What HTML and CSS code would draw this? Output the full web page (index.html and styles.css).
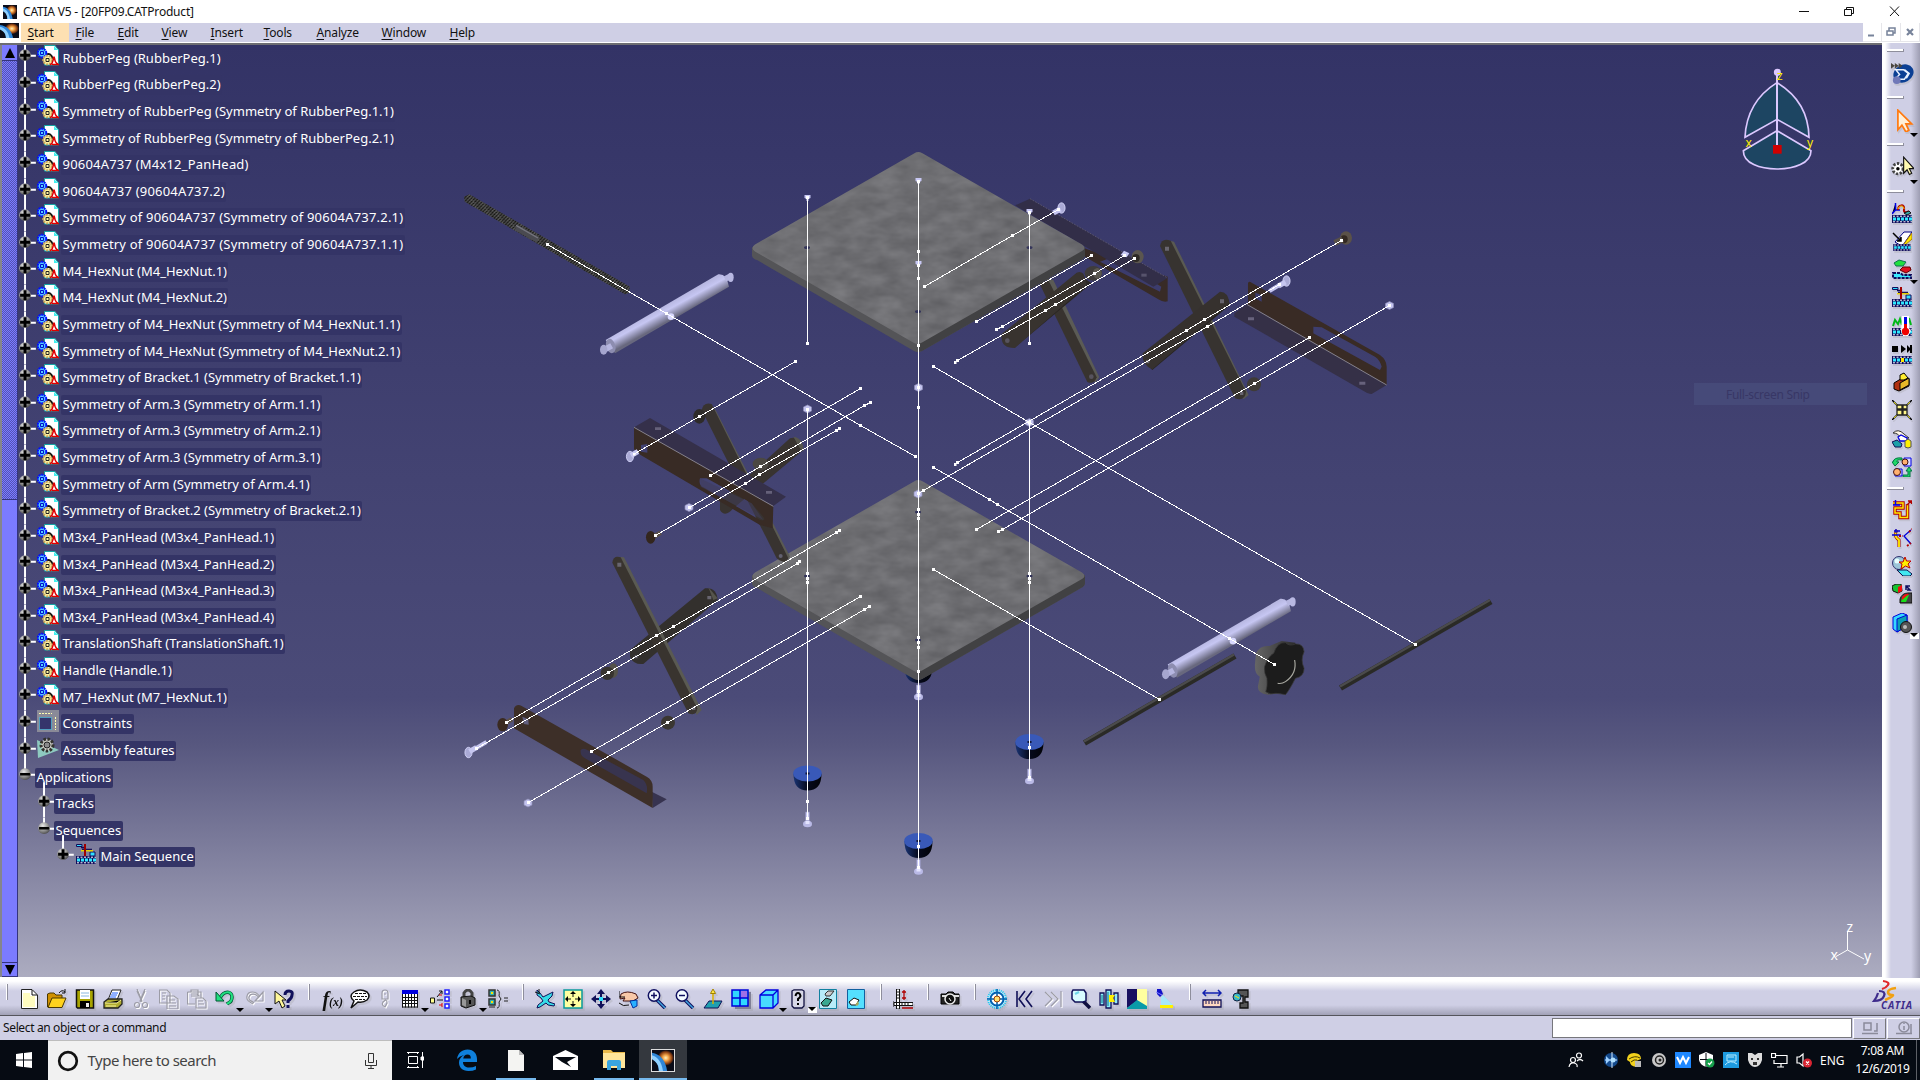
FILE: index.html
```html
<!DOCTYPE html>
<html lang="en">
<head>
<meta charset="utf-8">
<title>CATIA V5 - [20FP09.CATProduct]</title>
<link rel="stylesheet" href="styles.css">
</head>
<body>
<svg class="defs" width="0" height="0" aria-hidden="true">
  <defs>
    <radialGradient id="ball" cx=".4" cy=".3" r=".75"><stop offset="0" stop-color="#e8e8e8"/><stop offset=".6" stop-color="#8c8c8c"/><stop offset="1" stop-color="#444"/></radialGradient>
    <radialGradient id="burst"><stop offset="0" stop-color="#fff3c0"/><stop offset=".35" stop-color="#f4a548"/><stop offset=".75" stop-color="#8a3f12"/><stop offset="1" stop-color="#0a0a14"/></radialGradient>
    <symbol id="app" viewBox="0 0 16 16" preserveAspectRatio="none"><path fill="#0a0c18" d="M0 0h16v16H0z"/><ellipse cx="10" cy="6" rx="6" ry="6" fill="url(#burst)"/><path d="M0 2C6 3 10 8 11 16H5C5 11 3 8 0 6z" fill="#2f86d8"/><path d="M0 4C4 5 7 9 8 16H5C5 11 3 9 0 7z" fill="#8fd0ff"/></symbol>
    <symbol id="plus" viewBox="0 0 18 27"><path stroke="#fff" stroke-width="2" d="M7 0V27M12 11H18"/><circle cx="7" cy="10.3" r="6" fill="url(#ball)"/><path stroke="#000" stroke-width="3" d="M2 10.3H12M7 5.3V15.3"/></symbol>
    <symbol id="minus" viewBox="0 0 18 27"><path stroke="#fff" stroke-width="2" d="M7 0V10M12 11H18"/><circle cx="7" cy="10.3" r="6" fill="url(#ball)"/><path stroke="#000" stroke-width="2.6" d="M2 10.3H12"/></symbol>
    <symbol id="plusend" viewBox="0 0 18 27"><path stroke="#fff" stroke-width="2" d="M7 0V10M12 11H18"/><circle cx="7" cy="10.3" r="6" fill="url(#ball)"/><path stroke="#000" stroke-width="3" d="M2 10.3H12M7 5.3V15.3"/></symbol>
    <symbol id="part" viewBox="0 0 22 22"><path fill="#fff" stroke="#17a5a5" d="M7.500.5H18L21.500 5V20H7.500z"/><path fill="#40f0f0" d="M17 1V5H21z"/><path stroke="#111" stroke-width="2" fill="none" d="M9 10C12 8 14 9 16 14"/><circle cx="5" cy="8" r="4.300" fill="#58c8ff" stroke="#0010ff" stroke-width="2" stroke-dasharray="2 .7"/><path fill="none" stroke="#0010d0" d="M3.500 6.500h3v3h-3z"/><circle cx="10.500" cy="15" r="4.300" fill="#fff3a0" stroke="#c9a95c" stroke-width="2" stroke-dasharray="2 1"/><path fill="none" stroke="#222" d="M9 13.500h3v3h-3z"/><path fill="none" stroke="#e00000" stroke-width="1.500" d="M13 20C17 18 16 12 17 12S17 18 21 19M15 19.500H22"/></symbol>
    <symbol id="film" viewBox="0 0 20 8"><path fill="#100c5c" d="M0 0H20V8H0z"/><path stroke="#fff" stroke-dasharray="2 1.500" d="M1 1.200H20M1 6.800H20"/><path stroke="#30e8ff" stroke-width="3" stroke-dasharray="3 1" d="M1 4H20"/></symbol>
    <symbol id="seq" viewBox="0 0 20 20"><path fill="#30e0ff" stroke="#100c5c" d="M.5.5H6V2.500H.5zM14 8h5v4h-5z"/><path stroke="#100c5c" stroke-width="1.400" d="M5 3.500H9M6 5.500H16"/><path stroke="#e8d000" stroke-width="1.500" d="M5 6.700H17"/><path stroke="#a00000" stroke-width="2" d="M9 0V12"/><use href="#film" y="12" width="20" height="8"/></symbol>
    <symbol id="page" viewBox="0 0 20 20"><path fill="#fff" stroke="#222" d="M2.500.5H13L18.500 6V19.500H2.500z"/></symbol>
    <symbol id="glass" viewBox="0 0 20 20"><path stroke="#101060" stroke-width="3.500" d="M10 11L18 19"/><path stroke="#40a8e0" stroke-width="1.500" d="M10 11L18 19"/><circle cx="7" cy="6.500" r="5.700" fill="#f4fbff" stroke="#101060" stroke-width="1.500"/></symbol>
    <linearGradient id="rollA" gradientUnits="userSpaceOnUse" x1="638" y1="500" x2="660" y2="540"><stop offset="0" stop-color="#b8b8e2"/><stop offset=".35" stop-color="#c6c6f2"/><stop offset="1" stop-color="#68687e"/></linearGradient>
    <linearGradient id="foot"><stop offset="0" stop-color="#1a3474"/><stop offset=".5" stop-color="#060a1c"/><stop offset="1" stop-color="#020308"/></linearGradient>
    <linearGradient id="knobSide"><stop offset="0" stop-color="#666"/><stop offset="1" stop-color="#2b2b2b"/></linearGradient>
    <filter id="stone" x="0" y="0" width="100%" height="100%" color-interpolation-filters="sRGB"><feTurbulence type="fractalNoise" baseFrequency=".04 .08" numOctaves="3" seed="4"/><feColorMatrix values=".14 0 0 0 .36  .14 0 0 0 .36  .14 0 0 0 .375  0 0 0 0 1"/><feComposite in2="SourceGraphic" operator="in"/></filter>
    <pattern id="thread" width="4" height="12" patternUnits="userSpaceOnUse" patternTransform="rotate(62) scale(2)"><path fill="#4a4a4a" d="M0 0h4v12H0z"/><path stroke="#12120f" stroke-width="1.600" d="M0 0L4 12"/><path stroke="#7a7a76" stroke-width=".6" d="M2 0L4 7"/></pattern>
    <marker id="node" markerUnits="userSpaceOnUse" markerWidth="3" markerHeight="3" refX="1.500" refY="1.500"><path fill="#fff" d="M0 0h3v3H0z"/></marker>
    <g id="plate"><path fill="#545457" d="M752 247V256Q753 259 757 260L914 351Q918 353 922 351L1081 260Q1085 258 1085 255V247L918 337z"/><path fill="#414143" d="M918 338L1085 247V255Q1085 258 1081 260L922 351L918 352z"/><path fill="#717175" filter="url(#stone)" d="M914 153.500Q918 151 922 153L1082 244.500Q1087 248 1082 251L922 342.500Q918 345 914 343L755 251.500Q750 248 755 244.500z"/></g>
    <g id="peg"><path fill="url(#foot)" d="M-14 0C-14 12-9 17 0 17S14 12 14 0z"/><ellipse rx="14.300" ry="8" fill="#3959b8"/><path fill="#101738" d="M-2-1h4v2h-4z"/></g>
    <g id="screw"><path fill="#c8c8f2" stroke="#8d8db4" stroke-width=".7" d="M-2-12H2V-3H-2z"/><ellipse rx="4.500" ry="3.300" fill="#b9b9e6" cy="0"/><path fill="#e3e3ff" d="M-2-3h4v3h-4z"/></g>
    <g id="nut"><path fill="#c3c3ef" stroke="#8e8eb6" stroke-width=".7" d="M-4-2L0-4 4-2V2L0 4-4 2z"/></g>
    <g id="bolt"><ellipse rx="3.600" ry="5.200" fill="#aaaad6" stroke="#dcdcff" stroke-width=".8"/><path stroke="#c6c6f0" stroke-width="5" d="M1-1L8-5"/></g>
    <g id="roller"><path fill="url(#rollA)" d="M467 600L805 403Q830 400 837 440L495 640z"/><ellipse cx="482" cy="618" rx="14" ry="22" fill="#8d8db0" transform="rotate(-15 482 618)"/><path stroke="#b6b6e0" stroke-width="17" d="M462 630L485 617M825 417L842 408"/><ellipse cx="461" cy="629" rx="11" ry="15" fill="#a6a6cf"/><ellipse cx="842" cy="412" rx="9" ry="14" fill="#b8b8e2"/><circle cx="663" cy="530" r="10" fill="#d8d8ff"/></g>
  </defs>
</svg>

<header class="titlebar">
  <svg class="appicon" width="14" height="14"><use href="#app"/></svg>
  <span class="title">CATIA V5 - [20FP09.CATProduct]</span>
  <svg class="wincontrols" width="104" height="20" fill="none" stroke="#111"><path d="M0 10.500H10M45.500 8.500h7v6h-7zM47.500 8V6.500h7v6H53M91 5.500L100 15M100 5.500L91 15"/></svg>
</header>

<nav class="menubar">
  <svg class="docicon" width="21" height="20"><path fill="#fff" d="M0 0h21v20H0z"/><use href="#app" width="19" height="15"/></svg>
  <span class="menu on w48"><u>S</u>tart</span><span class="menu w42"><u>F</u>ile</span><span class="menu w44"><u>E</u>dit</span><span class="menu w49"><u>V</u>iew</span><span class="menu w53"><u>I</u>nsert</span><span class="menu w53"><u>T</u>ools</span><span class="menu w65"><u>A</u>nalyze</span><span class="menu w68"><u>W</u>indow</span><span class="menu"><u>H</u>elp</span>
  <span class="mdi"><svg width="18" height="18" stroke="#77839a" stroke-width="2"><path d="M5 12.500H11"/></svg><svg width="18" height="18" fill="none" stroke="#77839a" stroke-width="1.500"><path d="M5 8h6v4H5zM7 8V5h6v5h-2"/></svg><svg width="18" height="18" stroke="#77839a" stroke-width="2.200"><path d="M6 6L12 12M12 6L6 12"/></svg></span>
</nav>

<main class="work">
<section class="viewport">
  <svg class="scene" width="1882" height="932" viewBox="0 45 1882 932">
    <!-- rear bracket, partly behind the top plate -->
    <g transform="translate(900 140) scale(.33333)">
      <path fill="#382b26" fill-rule="evenodd" d="M553 325L803 410V484Q790 488 775 478L555 350zM600 365L780 455 784 440 640 350z"/>
      <path fill="#322e48" d="M345 196L390 176 803 414 760 440z"/>
      <path fill="none" stroke="#57536c" stroke-width="3" stroke-dasharray="5 4" d="M390 176L803 414"/>
      <path fill="#5b5b55" d="M440 415L460 420 598 712 585 728z"/><path fill="#38332f" d="M418 430L445 420 590 712Q582 735 562 726z"/>
      <path fill="#2b2725" d="M530 400L575 430 345 622 330 615z"/><path fill="#38332f" d="M305 582L530 398Q550 390 555 415L560 435 345 624Q300 625 305 582z"/>
      <circle cx="322" cy="602" r="7" fill="#57535e"/><circle cx="574" cy="710" r="7" fill="#57535e"/>
      <ellipse cx="580" cy="400" rx="26" ry="22" fill="#3f3c3a"/><ellipse cx="592" cy="400" rx="13" ry="16" fill="#5a574f"/>
      <ellipse cx="713" cy="350" rx="18" ry="20" fill="#5b564f"/><ellipse cx="708" cy="354" rx="11" ry="12" fill="#2d2925"/>
      <path fill="#c8c8f4" d="M662 345L672 332 688 340 680 352z"/><path fill="#57536c" d="M724 401h16v9h-16z"/>
    </g>
    <use href="#plate"/>
    <use href="#peg" x="918.500" y="666"/>
    <use href="#plate" y="328"/>
    <g fill="#33345a"><ellipse cx="807" cy="247.500" rx="3" ry="1.500"/><ellipse cx="1029.500" cy="247.500" rx="3" ry="1.500"/><ellipse cx="918" cy="311.500" rx="3" ry="1.500"/><ellipse cx="807" cy="576" rx="3" ry="1.500"/><ellipse cx="1029.500" cy="576" rx="3" ry="1.500"/><ellipse cx="918" cy="640" rx="3" ry="1.500"/><ellipse cx="918" cy="512" rx="3" ry="1.500"/></g>

    <!-- left side: threaded shaft, roller, scissor arms and bracket -->
    <g transform="translate(450 140) scale(.33333)">
      <path fill="url(#thread)" d="M44 185L42 170 58 163 540 440 536 460 525 463z"/>
      <path stroke="#4a4a50" stroke-width="18" d="M198 262L264 300"/><path stroke="#75757f" stroke-width="4" d="M198 256L264 294"/>
      <use href="#roller"/>
      <path fill="#5a5a52" d="M780 790L798 812 1020 1250 1000 1270z"/><path fill="#383330" d="M755 810Q760 785 785 792L1015 1255Q1005 1275 980 1255z"/>
      <path fill="#383330" d="M810 1085L1020 895Q1050 885 1060 930L850 1105Q825 1135 810 1110z"/><path fill="#55554d" d="M1030 890Q1062 895 1060 935L1050 925z"/>
      <ellipse cx="748" cy="829" rx="18" ry="22" fill="#2e2b29"/><ellipse cx="932" cy="972" rx="24" ry="19" fill="#4b4843"/><circle cx="992" cy="1248" r="6" fill="#626070"/>
      <path fill="#35304a" d="M552 862L600 834 1008 1070 970 1098z"/>
      <path fill="#382b25" fill-rule="evenodd" d="M552 862L970 1099 968 1165 930 1155 572 945 552 928zM573 915V935L592 938V912zM750 1015Q745 1035 760 1042L930 1140Q950 1145 940 1130L905 1090 770 1015z"/>
      <path fill="#403c5a" opacity=".55" d="M750 1015L905 1090 940 1140 752 1040z"/>
      <path stroke="#85818b" stroke-width="3" d="M552 862L970 1099"/><path fill="#66617a" d="M615 862h18v8h-18zM948 1053h18v8h-18z"/>
      <path stroke="#5a5048" stroke-width="14" d="M608 1192L632 1178"/><ellipse cx="602" cy="1192" rx="14" ry="19" fill="#33261d"/>
    </g>
    <g transform="translate(450 520) scale(.33333)">
      <path fill="#33302d" d="M540 390L765 205Q800 200 803 240L580 432Q550 435 540 410z"/><path fill="#56554c" d="M775 202L803 235 790 240z"/>
      <path fill="#5a5a52" d="M500 110L522 112 755 570 740 585z"/><path fill="#39342f" d="M487 128Q490 105 512 112L742 565Q740 590 715 580z"/>
      <path fill="#68656f" d="M502 128h12v12h-12zM772 228h12v10h-12zM726 560h10v10h-10zM554 406h9v9h-9z"/>
      <ellipse cx="490" cy="452" rx="14" ry="22" fill="#55534a"/><ellipse cx="472" cy="460" rx="20" ry="20" fill="#38342f"/><ellipse cx="654" cy="608" rx="21" ry="21" fill="#3b3732"/>
      <path fill="#37334f" d="M605 815L650 838 608 864z"/>
      <path fill="#3d2f28" d="M192 565Q200 550 215 558L590 770Q608 780 608 800V864L192 625z"/>
      <path fill="#38344f" d="M392 690Q400 682 412 690L580 780Q595 795 590 820L405 715Q390 708 392 690z"/><path fill="#626080" d="M217 590L235 598 236 614 222 612z"/>
      <path stroke="#5d5148" stroke-width="14" d="M165 610L186 598"/><ellipse cx="158" cy="614" rx="16" ry="20" fill="#3a2a20"/>
    </g>
    <!-- right side: scissor arms and bracket -->
    <g transform="translate(900 140) scale(.33333)">
      <path fill="#5a5a52" d="M800 300L822 305 1046 765 1030 778z"/><path fill="#373330" d="M780 318Q785 292 812 302L1038 755Q1035 785 1005 775z"/>
      <path fill="#282523" d="M745 678L985 478 990 495 757 690z"/><path fill="#36312e" d="M728 640L960 455Q985 455 988 490L757 688Q725 675 728 640z"/>
      <path fill="#68656f" d="M795 320h12v12h-12zM960 478h12v12h-12zM738 660h10v10h-10zM1020 755h10v10h-10z"/>
      <ellipse cx="1062" cy="733" rx="21" ry="21" fill="#3f3b36"/>
      <path fill="#353047" d="M1003 520L1042 492 1460 735 1415 762Q1410 762 1400 758L1003 530z"/>
      <path fill="#392b25" fill-rule="evenodd" d="M1044 430Q1045 422 1055 428L1440 645Q1460 660 1460 680V735L1044 494zM1240 560V580L1440 690 1445 680Q1440 660 1425 650L1265 562zM1066 458V475L1085 485V465z"/>
      <path stroke="#85818b" stroke-width="3" d="M1042 494L1460 735"/><path fill="#67627c" d="M1044 532h18v9h-18zM1378 725h18v9h-18z"/>
      <ellipse cx="1338" cy="294" rx="18" ry="20" fill="#5b5248"/><ellipse cx="1332" cy="298" rx="11" ry="12" fill="#332922"/><path stroke="#575048" stroke-width="18" d="M1304 309L1328 298"/>
    </g>

    <!-- rods, roller and knob at lower right -->
    <g fill="none"><path stroke="#2a2a26" stroke-width="6" d="M1084.500 743L1235 656M1340.500 688L1491 601.500"/><path stroke="#4b4b4c" stroke-width="2.500" d="M1084 741.500L1234 654.500M1340 686.500L1490 600"/></g>
    <g transform="translate(1012 464.500) scale(.33333)"><use href="#roller"/></g>
    <g transform="translate(900 460) scale(.3954 .33333)">
      <path fill="url(#knobSide)" d="M900 580Q910 555 935 558L965 543 1000 548V600L960 700 930 704Q905 700 905 680L910 650Q895 640 898 610z"/>
      <path fill="#1c1c1c" stroke="#3a3a3a" stroke-width="2" d="M945 580Q955 545 975 548Q985 560 1000 552Q1020 550 1022 575Q1012 600 1022 625Q1022 650 1000 655Q985 690 975 704Q955 700 950 700Q935 705 925 695Q930 680 928 655Q920 640 922 620Q930 590 945 580z"/>
      <path fill="none" stroke="#a8a8a0" stroke-width="3" d="M998 600Q1005 640 975 665Q965 673 955 670"/>
    </g>
    <!-- feet and fasteners -->
    <use href="#peg" x="807.500" y="773.500"/><use href="#peg" x="918.500" y="841"/><use href="#peg" x="1029.500" y="742"/>
    <use href="#screw" x="807.500" y="824"/><use href="#screw" x="918.500" y="697"/><use href="#screw" x="918.500" y="871.500"/><use href="#screw" x="1029.500" y="781"/>
    <g fill="#c8c8f4"><path id="cap" d="M804.500 195h6v3l-2 1v2h-2v-2l-2-1z"/><use href="#cap" x="111" y="-17"/><use href="#cap" x="111" y="66"/><use href="#cap" x="222" y="14"/></g>
    <use href="#nut" x="807.500" y="409"/><use href="#nut" x="918.500" y="387.500"/><use href="#nut" x="918" y="494"/><use href="#nut" x="1029.500" y="422.500"/><use href="#nut" x="689" y="507.500"/><use href="#nut" x="528" y="803"/><use href="#nut" x="1389.500" y="305.500"/>
    <use href="#bolt" x="630" y="456.500"/><g transform="translate(468.500 752.500)"><use href="#bolt"/><path stroke="#c6c6f0" stroke-width="4" d="M7-4L18-10.500"/></g>
    <g transform="translate(1061.500 208) rotate(180)"><use href="#bolt"/></g><g transform="translate(1286.500 281) rotate(180)"><use href="#bolt"/><path stroke="#c6c6f0" stroke-width="4" d="M7-4L17-10"/></g>

    <!-- exploded-view tracks -->
    <g class="tracks">
      <path d="M807.500 197.500V343.500M918.500 181.500V251.500V265.500V278.500V345.500V387.500V407.500V493.500V509.500V514.500V518.500V637.500V642.500V647.500V671.500V691.500V846.500V867.500M1029.500 212.500V343.500M807.500 409.500V573.500V578.500V582.500V801.500V818.500M1029.500 423V573.500V578.500V582.500V747.500V777.500"/>
      <path d="M547.500 244.500L666.500 313.500 860.500 425.500 915.500 456.500M634 454L699.500 416.500 795.500 361.500M710.500 475.500L860.500 388.500M689.500 507.500L760.500 466.500 864.500 405.500 870.500 402.500M655.500 535.500L745.500 483.500 759.500 474.500 836.500 430.500 839.500 428.500M924.500 286.500L1012.500 235.500 1058.500 209.500M976.500 321.500L1091.500 255.500M996.500 329.500L1002.500 326.500 1094.500 273.500 1124.500 255.500M955 362.500L957.500 360.500 1045.500 310.500 1055.500 304.500 1134.500 258.500"/>
      <path d="M933.500 366.500L1029.500 422.500 1415.500 644.500M955 464.500L957.500 462.500 1186.500 330.500 1204.500 319.500 1341.500 240.500M918.500 493.500L923.500 490.500 1207.500 326.500 1279.500 284.500M976.500 529.500L1309.500 337.500M998.500 531.500L1002.500 529.500 1254.500 383.500 1389.500 305.500M933.500 467.500L989.500 499.500 997.500 504.500 1229.500 638.500 1274.500 664.500M933.500 569.500L1159.500 699.500"/>
      <path d="M506.500 722.500L656.500 635.500 673.500 626.500 836.500 532.500 839.500 530.500M476.500 748.500L608.500 672.500 797.500 563.500 799.500 561.500M591.500 751.500L860.500 596.500M528.500 802.500L667.500 722.500 864.500 609.500 869.500 606.500"/>
    </g>

    <!-- compass -->
    <g transform="translate(1680 0) scale(.33333)" fill="#1d4562" stroke="#dcc8ff" stroke-width="5">
      <path d="M291 248Q200 305 195 412L291 358 387 412Q385 305 291 248zM291 392L190 452C190 490 240 507 291 507S393 490 393 452z"/><path stroke-width="6" d="M291 217V438"/><circle cx="292" cy="217" r="8" fill="#dcc8ff"/><path stroke="none" fill="#d00000" d="M279 435h26v26h-26z"/>
    </g>
    <g class="axis yellow"><text x="1777" y="80">z</text><text x="1745.500" y="146.500">x</text><text x="1807" y="147">y</text></g>
    <path fill="none" stroke="#fff" d="M1847.500 931V950L1836 956.500M1847.500 950L1864 959"/>
    <g class="axis"><text x="1846.500" y="932">z</text><text x="1830.500" y="960">x</text><text x="1864" y="961">y</text></g>
    <path fill="#464a79" d="M1694 383h173v22h-173z"/><text class="snip" x="1726" y="398.500" textLength="84">Full-screen Snip</text>
  </svg>

  <div class="scroll"><span class="arrow"><svg width="10" height="10"><path d="M5 0L10 10H0z"/></svg></span><span class="track"></span><span class="thumb"></span><span class="arrow"><svg width="10" height="10"><path d="M0 0H10L5 10z"/></svg></span></div>

  <ul class="tree">
    <li><svg class="node"><use href="#plus"/></svg><svg class="ico"><use href="#part"/></svg><span>RubberPeg (RubberPeg.1)</span></li>
    <li><svg class="node"><use href="#plus"/></svg><svg class="ico"><use href="#part"/></svg><span>RubberPeg (RubberPeg.2)</span></li>
    <li><svg class="node"><use href="#plus"/></svg><svg class="ico"><use href="#part"/></svg><span>Symmetry of RubberPeg (Symmetry of RubberPeg.1.1)</span></li>
    <li><svg class="node"><use href="#plus"/></svg><svg class="ico"><use href="#part"/></svg><span>Symmetry of RubberPeg (Symmetry of RubberPeg.2.1)</span></li>
    <li><svg class="node"><use href="#plus"/></svg><svg class="ico"><use href="#part"/></svg><span class="num">90604A737 (M4x12_PanHead)</span></li>
    <li><svg class="node"><use href="#plus"/></svg><svg class="ico"><use href="#part"/></svg><span class="num">90604A737 (90604A737.2)</span></li>
    <li><svg class="node"><use href="#plus"/></svg><svg class="ico"><use href="#part"/></svg><span class="num">Symmetry of 90604A737 (Symmetry of 90604A737.2.1)</span></li>
    <li><svg class="node"><use href="#plus"/></svg><svg class="ico"><use href="#part"/></svg><span class="num">Symmetry of 90604A737 (Symmetry of 90604A737.1.1)</span></li>
    <li><svg class="node"><use href="#plus"/></svg><svg class="ico"><use href="#part"/></svg><span>M4_HexNut (M4_HexNut.1)</span></li>
    <li><svg class="node"><use href="#plus"/></svg><svg class="ico"><use href="#part"/></svg><span>M4_HexNut (M4_HexNut.2)</span></li>
    <li><svg class="node"><use href="#plus"/></svg><svg class="ico"><use href="#part"/></svg><span>Symmetry of M4_HexNut (Symmetry of M4_HexNut.1.1)</span></li>
    <li><svg class="node"><use href="#plus"/></svg><svg class="ico"><use href="#part"/></svg><span>Symmetry of M4_HexNut (Symmetry of M4_HexNut.2.1)</span></li>
    <li><svg class="node"><use href="#plus"/></svg><svg class="ico"><use href="#part"/></svg><span>Symmetry of Bracket.1 (Symmetry of Bracket.1.1)</span></li>
    <li><svg class="node"><use href="#plus"/></svg><svg class="ico"><use href="#part"/></svg><span>Symmetry of Arm.3 (Symmetry of Arm.1.1)</span></li>
    <li><svg class="node"><use href="#plus"/></svg><svg class="ico"><use href="#part"/></svg><span>Symmetry of Arm.3 (Symmetry of Arm.2.1)</span></li>
    <li><svg class="node"><use href="#plus"/></svg><svg class="ico"><use href="#part"/></svg><span>Symmetry of Arm.3 (Symmetry of Arm.3.1)</span></li>
    <li><svg class="node"><use href="#plus"/></svg><svg class="ico"><use href="#part"/></svg><span>Symmetry of Arm (Symmetry of Arm.4.1)</span></li>
    <li><svg class="node"><use href="#plus"/></svg><svg class="ico"><use href="#part"/></svg><span>Symmetry of Bracket.2 (Symmetry of Bracket.2.1)</span></li>
    <li><svg class="node"><use href="#plus"/></svg><svg class="ico"><use href="#part"/></svg><span>M3x4_PanHead (M3x4_PanHead.1)</span></li>
    <li><svg class="node"><use href="#plus"/></svg><svg class="ico"><use href="#part"/></svg><span>M3x4_PanHead (M3x4_PanHead.2)</span></li>
    <li><svg class="node"><use href="#plus"/></svg><svg class="ico"><use href="#part"/></svg><span>M3x4_PanHead (M3x4_PanHead.3)</span></li>
    <li><svg class="node"><use href="#plus"/></svg><svg class="ico"><use href="#part"/></svg><span>M3x4_PanHead (M3x4_PanHead.4)</span></li>
    <li><svg class="node"><use href="#plus"/></svg><svg class="ico"><use href="#part"/></svg><span>TranslationShaft (TranslationShaft.1)</span></li>
    <li><svg class="node"><use href="#plus"/></svg><svg class="ico"><use href="#part"/></svg><span>Handle (Handle.1)</span></li>
    <li><svg class="node"><use href="#plus"/></svg><svg class="ico"><use href="#part"/></svg><span>M7_HexNut (M7_HexNut.1)</span></li>
    <li><svg class="node"><use href="#plus"/></svg><svg class="ico" viewBox="0 0 22 22"><path fill="#8a8a98" d="M0 0h22v22H0z"/><path fill="#35356c" stroke="#40e0ff" stroke-dasharray="1 1" d="M2.500 7.500h12v12h-12z"/><path fill="none" stroke="#ffffb0" stroke-dasharray="2 1" d="M2 3.500H15M18.500 7V20"/></svg><span>Constraints</span></li>
    <li><svg class="node"><use href="#plus"/></svg><svg class="ico" viewBox="0 0 22 22"><path fill="#8ecac0" d="M0 3L22 13 1 21z"/><circle cx="10" cy="8" r="6" fill="#c8c8c0" stroke="#33332f" stroke-width="3" stroke-dasharray="2.500 1.500"/><circle cx="10" cy="8" r="3" fill="#8a8a8a" stroke="#222"/></svg><span>Assembly features</span></li>
    <li><svg class="node"><use href="#minus"/></svg><span class="bare">Applications</span></li>
    <li class="l2"><svg class="node stem" viewBox="0 0 18 27"><path stroke="#fff" stroke-width="2" d="M7-9V8"/><use href="#plus"/></svg><span class="bare">Tracks</span></li>
    <li class="l2"><svg class="node"><use href="#minus"/></svg><span class="bare">Sequences</span></li>
    <li class="l3"><svg class="node stem" viewBox="0 0 18 27"><path stroke="#fff" stroke-width="2" d="M7-9V8"/><use href="#plusend"/></svg><svg class="ico seq"><use href="#seq"/></svg><span>Main Sequence</span></li>
  </ul>
</section>

<aside class="sidebar">
  <i class="hgrip"></i>
  <svg class="tool top" viewBox="0 0 24 22"><ellipse cx="13" cy="11" rx="11" ry="9" fill="#0b3f94" transform="rotate(-30 13 11)"/><path fill="none" stroke="#e8f0ff" stroke-width="1.500" d="M5 7H13L18 11 14 17H4L9 12zM14 7L19 11 16 16"/><circle cx="6" cy="18" r="4" fill="#7078b8"/><path fill="#4a4640" d="M0 0l4 3-4 3zM4 0l4 3-4 3zM8 0l4 3-4 3z"/></svg>
  <i class="hgrip"></i>
  <svg class="tool top" viewBox="0 0 20 20"><path fill="#fff0d8" stroke="#ff7a10" stroke-width="1.500" d="M6 1V18L9.500 14 13 20 15.500 18.500 13 13H18z"/></svg><b class="drop"></b>
  <i class="hgrip"></i>
  <svg class="tool top" viewBox="0 0 20 20"><circle cx="6" cy="11" r="4.500" fill="#fff" stroke="#444" stroke-width="2.500" stroke-dasharray="2 1.300"/><circle cx="6" cy="11" r="1.500"/><path fill="#fff9b0" stroke="#111" d="M11 1V15L14 12 16 16 18 15 16 11H20z"/></svg><b class="drop"></b>
  <i class="hgrip"></i>
  <div class="stack">
    <svg class="tool" viewBox="0 0 20 20"><path stroke="#0000e0" stroke-width="1.500" d="M3.500 0V7L0 11M3 7H8"/><path fill="none" stroke="#b00000" stroke-width="2" d="M6 7C6 1 13 1 12 6S16 9 17 8"/><path fill="none" stroke="#ffe400" d="M6 6C7 2 12 2 12 6"/><path fill="#36a8a8" stroke="#111" d="M12 10L17 8 19 10 15 12z"/><use href="#film" y="12" width="20" height="8"/></svg>
    <svg class="tool" viewBox="0 0 20 20"><path fill="#fff" stroke="#000080" d="M3 11L12 1H20L11 14H8z"/><path fill="#ffe900" stroke="#b08000" d="M12 13L20 2V8L13 14z"/><path stroke="#000" stroke-width="1.500" d="M1 2L9 10M9 6V10H5"/><use href="#film" y="13" width="20" height="7"/></svg>
    <svg class="tool" viewBox="0 0 20 20"><path fill="#20e040" stroke="#107050" d="M2 4L7 1 14 3 11 7H4z"/><path fill="#e01020" stroke="#600" d="M8 11L11 8 18 8 19 11 14 14z"/><path fill="#39e8ff" stroke="#100c5c" stroke-width="2" stroke-dasharray="3 1" d="M1 14H8L11 16H19V19H1z"/></svg>
    <svg class="tool"><use href="#seq"/></svg>
    <svg class="tool" viewBox="0 0 20 20"><path fill="none" stroke="#00b818" stroke-width="2" d="M1 10L3 4 6 8 8 3 10 9M17 2L19 9"/><use href="#film" y="12" width="20" height="8"/><path fill="#fff" d="M10 0h7v12l2 3-3 5h-5l-2-5z"/><path stroke="#0000e8" stroke-width="3" d="M13.500 1V8"/><path stroke="#f00000" stroke-width="3" d="M13.500 8V15"/><circle cx="13.500" cy="15.500" r="3.700" fill="#f00000"/></svg>
    <svg class="tool" viewBox="0 0 20 20"><path d="M0 2h6v6H0zM9 1l5 4-5 4zM15 1l4 4-4 4zM18 1h2v8h-2z"/><use href="#film" y="12" width="20" height="8"/><path fill="#ffe900" d="M9 14h3v4H9z"/></svg>
    <svg class="tool" viewBox="0 0 20 20"><path fill="#b03010" stroke="#000" d="M2 11L12 5 17 7V14L7 19 2 17z"/><path fill="#e8b828" stroke="#000" d="M8 11L17 6V13L8 18z"/><path fill="#ffef30" stroke="#000" d="M8 8V3L12 1 16 6 12 8z"/></svg>
    <svg class="tool" viewBox="0 0 20 20"><path stroke="#000" stroke-width="1.500" d="M0 0L20 20M20 0L0 20"/><path stroke="#d6d000" d="M2 2L18 18M18 2L2 18"/><path fill="#fff68a" stroke="#222" stroke-width="1.300" d="M5 5h5v4H5zM11 5h4v4h-4zM5 10h5v5H5zM11 10h4v5h-4z"/></svg>
    <svg class="tool" viewBox="0 0 20 20"><path fill="#fff8e8" stroke="#333" d="M1 4Q6-1 12 5L17 9H8Q7 4 1 4z"/><path fill="#fff" stroke="#0000e0" stroke-width="1.300" d="M6 8L9 6 15 9V12H8z"/><path fill="#1ba0a8" stroke="#101058" d="M0 13L5 11 10 15 9 18 3 18z"/><path fill="#fff000" stroke="#555" d="M13 12L16 10 19 12V18L16 19 13 18z"/></svg>
    <svg class="tool" viewBox="0 0 20 20"><path fill="#20d868" stroke="#074" d="M1 5Q2 0 10 1V3Q4 2 5 5H7L3 9 0 5zM11 18H16V14H14L17 10 20 14H18V20H11z"/><path fill="#d8d8ff" stroke="#0000e8" d="M12 1h7v8h-7zM3 12h7v7H3z"/><circle cx="13" cy="5" r="3" fill="#ffb070" stroke="#411"/><circle cx="5" cy="15" r="3.500" fill="#ffb070" stroke="#411"/></svg>
  </div><b class="drop mid"></b>
  <i class="hgrip low"></i>
  <div class="stack">
    <svg class="tool" viewBox="0 0 20 20"><path fill="none" stroke="#b00000" stroke-width="3.400" d="M1 3H11V8H3V13H8V17.500H15.500V4"/><path fill="none" stroke="#ffe800" stroke-width="1.500" d="M1 3H11V8H3V13H8V17.500H15.500V4"/><path fill="none" stroke="#b00000" stroke-width="1.300" d="M15 5L19 1M16 1H19.500V4"/><path stroke="#00e" stroke-width="1.500" d="M3.500 0V5M1 5H8"/></svg>
    <svg class="tool" viewBox="0 0 20 20"><path fill="none" stroke="#a00000" stroke-width="3" d="M5 2Q1 8 7 12V19"/><path fill="none" stroke="#fff000" stroke-width="1.800" d="M5 2Q1 8 7 12V19"/><path fill="none" stroke="#0000d8" stroke-width="1.300" d="M19 2L12 8 19 16M0 7H9M4 1V5M2 3H8"/><path fill="none" stroke="#b00000" stroke-width="1.800" stroke-dasharray="2 1.500" d="M7 8H11M17 4L20 1M15 18L19 15"/></svg>
    <svg class="tool" viewBox="0 0 20 20"><circle cx="7" cy="7" r="6.500" fill="#9cc4d8" stroke="#303070"/><circle cx="5" cy="5" r="2.500" fill="#e8ffff"/><path fill="#42e8f0" stroke="#101050" d="M5 14H15L20 18 18 20H11z"/><path fill="#fff000" stroke="#c00000" d="M13 1L14.500 5H19L16 8 18 12 13.500 10 9 13 10 8 7 6H11z"/></svg>
    <svg class="tool" viewBox="0 0 20 20"><path fill="#18c030" stroke="#111" d="M0 2L4 0H9L10 7 6 9 1 7z"/><path fill="#f01010" d="M6 3L10 1V7L6 9z"/><path fill="none" stroke="#101060" stroke-width="1.500" d="M14 6V2H18M14 2L18 6H15"/><path fill="#444" stroke="#111" d="M8 19V15Q10 9 16 9H20V19z"/><path fill="#18e018" d="M9 18Q10 11 17 11L14 18z"/><path fill="#f01010" d="M10 13Q13 9 17 10L10 16z"/></svg>
    <svg class="tool" viewBox="0 0 20 20"><path fill="#36d8ff" stroke="#0000d8" d="M1 4L10 0 15 2V13L5 19 1 16z"/><path fill="#0aa0b4" stroke="#0000d8" d="M5 6L15 2V13L5 19z"/><circle cx="14" cy="14" r="5.500" fill="#555" stroke="#111"/><circle cx="13" cy="14" r="2" fill="#bbb"/></svg>
  </div><b class="drop box"></b>
</aside>
</main>

<section class="toolbar">
  <i class="vgrip first"></i>
  <svg class="t" viewBox="0 0 20 20"><use href="#page"/><path fill="#fffcc0" d="M4 4h7v3h5v11H4z"/><path fill="none" stroke="#111" d="M13 1V6H18"/></svg>
  <svg class="t" viewBox="0 0 20 20"><path fill="#d09000" stroke="#4a3800" d="M.5 18V5L3 4H7L9 6H15V9"/><path fill="#ffd21c" stroke="#4a3800" d="M1 18.500L5 9H19L15 18.500z"/><path fill="none" stroke="#111" d="M12 4Q15 0 18 3M18 0V4H15"/></svg>
  <svg class="t" viewBox="0 0 20 20"><path fill="#a8a400" stroke="#111" stroke-width="1.500" d="M1.500 1h17v18h-16l-1-1z"/><path fill="#fff" d="M5 1h10v9H5z"/><path stroke="#8ab8e0" d="M6 4H14M6 7H14"/><path d="M5 12h10v7H5z"/><path fill="#eee" d="M11 14h3v4h-3z"/></svg>
  <svg class="t" viewBox="0 0 20 20"><path fill="#fff" stroke="#222" d="M5 11L9 1H18L14 11z"/><path stroke="#2060ff" d="M9 4H15M8 6H14M7 8H13"/><path fill="#b0ac30" stroke="#222" stroke-width="1.300" d="M1 13L5 10H19V15L15 19H1z"/><path stroke="#f8f4a0" d="M2 14H14L18 11M3 17H13"/></svg>
  <svg class="t dis" viewBox="0 0 20 20"><path d="M6 0L11 12M14 0L9 12M6 2L11 13M14 2L9 13"/><circle cx="6" cy="16" r="2.500"/><circle cx="14" cy="16" r="2.500"/></svg>
  <svg class="t dis" viewBox="0 0 20 20"><path d="M.5 1H8L11 4V14H.5zM8 7H15L19 10V20H8zM3 4H7M3 7H6M3 10H6M10 11H16M10 14H17M10 17H17"/></svg>
  <svg class="t dis" viewBox="0 0 20 20"><path d="M.5 3H14V9M.5 3V15H8M4 3V1H11V5H4M4 7H12L10 5M9 9H16L19 12V19H9zM11 12H16M11 15H17"/></svg>
  <svg class="t wide" viewBox="0 0 20 20"><path fill="none" stroke="#053" stroke-width="3.500" d="M5 9C9 1 17 2 17 8S14 13 12 15"/><path fill="none" stroke="#20e080" stroke-width="2" d="M5 9C9 1 17 2 17 8S14 13 12 15"/><path fill="#20e080" stroke="#053" d="M1 3V12H9z"/></svg><b class="drop"></b>
  <svg class="t wide dis" viewBox="0 0 20 20"><path d="M15 8C11 1 3 2 2 7S5 13 8 15M14 9C11 4 5 4 4 8S6 11 9 14M18 3V12H10z"/></svg><b class="drop"></b>
  <svg class="t" viewBox="0 0 20 20"><path fill="#fff79a" stroke="#111" d="M1 2V15L5 12 8 19 11 17 8 11H12z"/><path fill="none" stroke="#10105c" stroke-width="3" d="M11 6Q11 2 15 2T18 6Q18 9 14 12V14"/><path fill="#10105c" d="M12.500 16h3v3h-3z"/></svg>
  <i class="vgrip"></i>
  <span class="t fx">f<small>(x)</small></span>
  <svg class="t" viewBox="0 0 20 20"><path fill="#fff" stroke="#111" stroke-width="1.500" d="M4 3Q10-1 17 3Q21 7 17 11Q13 14 8 13L1 19 4 12Q-2 7 4 3z"/><path stroke="#111" stroke-dasharray="3 1" d="M5 4.500H16M3 7.500H17M5 10.500H15"/></svg>
  <svg class="t dis nar" viewBox="0 0 20 20"><path d="M7 10V4Q7 1 10 1T13 4V10zM9 5H11M8 13Q12 9 12 14L10 18Q6 16 8 13z"/></svg>
  <svg class="t wide" viewBox="0 0 20 20"><path fill="#fff" d="M2 1h16v17H2z"/><path fill="#0000e0" d="M2 1h16v4H2z"/><path fill="none" stroke="#111" d="M2.500 5V18.500M5.500 5V18.500M8.500 5V18.500M11.500 5V18.500M14.500 5V18.500M17.500 5V18.500M2 8.500H18M2 11.500H18M2 14.500H18M2 18H18"/></svg><b class="drop"></b>
  <svg class="t" viewBox="0 0 20 20"><path fill="#ffff90" stroke="#111" d="M.5 9h4v5h-4z"/><path fill="#fff" stroke="#2020ff" stroke-width="1.500" d="M15 1h4v4h-4zM15 8h4v4h-4zM15 15h4v4h-4z"/><path fill="none" stroke="#111" d="M7 11H13M7 8L12 2M9 2H12V5"/><path stroke="#e00000" d="M9 6H12M9 16H12M12 14V18"/></svg>
  <svg class="t wide" viewBox="0 0 20 20"><path fill="none" stroke="#444" stroke-width="3" d="M6 9V4Q10-2 14 4V9"/><path fill="#555" stroke="#111" d="M3 8L13 7 17 9V16L8 19 3 17z"/><path fill="#999" d="M4 9L8 11V18L4 16z"/><path stroke="#000" stroke-width="2" d="M12 11V15"/></svg><b class="drop"></b>
  <svg class="t" viewBox="0 0 20 20"><path fill="#30b0b0" stroke="#333" stroke-width="1.500" d="M1 1h6v6H1zM1 10h6v6H1z"/><path fill="#ffe000" d="M3 3h2v2H3zM3 12h2v2H3z"/><path fill="none" stroke="#222" d="M9 1Q12 1 11 7L13 10 11 13Q12 19 9 19M16 9H20M16 12H20M1 18H7"/></svg>
  <i class="vgrip"></i>
  <svg class="t" viewBox="0 0 20 20"><path fill="#36dce8" stroke="#101058" d="M2 1L5 4 8 8 14 5 18 3 17 7 13 11 14 13 20 15 19 17 13 16 11 14 5 18 2 19 3 16 8 12 6 9 2 6z"/><path fill="none" stroke="#111" d="M0 3L5 5M4 0V4"/></svg>
  <svg class="t" viewBox="0 0 20 20"><path fill="#ffffa0" stroke="#0a9a9a" stroke-width="1.500" d="M1 1h18v18H1z"/><path stroke="#111" fill="none" d="M10 3V8M10 12V17M3 10H8M12 10H17"/><path d="M10 2l3 3H7zM10 18l3-3H7zM2 10l3-3v6zM18 10l-3-3v6z"/></svg>
  <svg class="t" viewBox="0 0 20 20"><path stroke="#101058" stroke-width="2" d="M10 2V18M2 10H18"/><path fill="#101058" d="M10 0l4 5H6zM10 20l4-5H6zM0 10l5-4v8zM20 10l-5-4v8z"/><path fill="#30e0ff" d="M8 8h4v4H8z"/></svg>
  <svg class="t" viewBox="0 0 20 20"><path fill="#f8c8a8" stroke="#411" d="M2 5Q8 1 17 5L19 9 14 12H4L6 9 1 10z"/><path fill="#28b0ff" stroke="#0030a0" d="M11 12L18 11V17L14 19z"/><path fill="none" stroke="#111" d="M0 2V8H6M0 14Q4 18 10 16"/></svg>
  <svg class="t" viewBox="0 0 20 20"><use href="#glass"/><path stroke="#101060" stroke-width="1.500" d="M4 6.500H10M7 3.500V9.500"/></svg>
  <svg class="t" viewBox="0 0 20 20"><use href="#glass"/><path stroke="#101060" stroke-width="1.500" d="M4 6.500H10"/></svg>
  <svg class="t" viewBox="0 0 20 20"><path fill="#20a0b0" stroke="#101058" d="M1 19L6 12H19L15 19z"/><path stroke="#d8b000" stroke-width="1.500" d="M10 15V4"/><path fill="#ffe84a" stroke="#a08000" d="M7.500 4.500L10 0 12.500 4.500z"/></svg>
  <svg class="t" viewBox="0 0 20 20"><path fill="#808098" d="M4 3h16v17H4z"/><path fill="#30d8ff" stroke="#0000d8" stroke-width="1.500" d="M1 1h16v16H1z"/><path fill="#a070e8" d="M10 2h6v7h-6z"/><path stroke="#0000d8" stroke-width="1.500" d="M9 1V17M1 9H17"/></svg>
  <svg class="t wide" viewBox="0 0 20 20"><path fill="#48dcff" stroke="#0000e0" stroke-width="1.300" d="M1 6L7 1H19V14L14 19H1zM1 6H14V19M14 6L19 1"/></svg><b class="drop"></b>
  <svg class="t wide" viewBox="0 0 20 20"><path fill="#d8d8e8" stroke="#101040" stroke-width="1.300" d="M4 2L6 .8H14L16 2V17L14 19H6L4 17z"/><path fill="none" stroke="#000" stroke-width="2" d="M7.500 7Q8 4 10 4T12.500 7Q12 9 10 10V12M10 14V16"/></svg><b class="drop box"></b>
  <svg class="t" viewBox="0 0 20 20"><path fill="#b8ecf8" stroke="#1080a0" d="M1.500.5h17v19h-17z"/><path fill="#ccc" stroke="#333" d="M7 5L10 2 16 2 12 7H8z"/><path fill="#38a890" stroke="#111" d="M3 14L8 9 14 11 10 17H5z"/></svg>
  <svg class="t" viewBox="0 0 20 20"><path fill="#54e0ff" stroke="#1060a0" d="M1.500.5h17v19h-17z"/><path fill="#fff" stroke="#111" d="M3 13L8 9 13 11 10 16H5z"/><path fill="#a8a860" d="M9 16l3-4 1 3-2 2z"/></svg>
  <i class="vgrip"></i>
  <svg class="t" viewBox="0 0 20 20"><path fill="#fff" stroke="#111" d="M3.500 0H6.500V20H3.500zM1 13.500H20V16.500H1zM4 3H6M4 6H6M4 9H6M9 14V16M12 14V16M15 14V16M0 12V18"/><path stroke="#b00000" stroke-width="1.300" d="M11 1V11M9 3h4M9 9h4M9 19H20"/></svg>
  <i class="vgrip"></i>
  <svg class="t" viewBox="0 0 20 20"><path fill="#222" stroke="#000" d="M1 5H6L8 3H13L15 5H19V15H1z"/><path fill="#ddd" d="M2 6h17v2H2z"/><circle cx="10" cy="10" r="5" fill="#111" stroke="#eee" stroke-width="1.500"/><path stroke="#fff" d="M9 9L11 12"/></svg>
  <i class="vgrip"></i>
  <svg class="t" viewBox="0 0 20 20"><circle cx="10" cy="10" r="9" fill="#c8f0ff" stroke="#20c8f0" stroke-width="2" stroke-dasharray="1 1"/><circle cx="10" cy="10" r="6.500" fill="#fff" stroke="#0060b0" stroke-width="2"/><path stroke="#0060b0" stroke-width="1.500" d="M10 0V20M0 10H20"/><circle cx="10" cy="10" r="3" fill="#ffe070" stroke="#a04000"/></svg>
  <svg class="t" viewBox="0 0 20 20"><path fill="none" stroke="#101058" stroke-width="1.600" d="M2 2V18M10 2L4 10 10 18M17 2L11 10 17 18"/></svg>
  <svg class="t dis" viewBox="0 0 20 20"><path d="M2 3L9 10 2 17M8 3L15 10 8 17M18 2V18"/></svg>
  <svg class="t" viewBox="0 0 20 20"><path stroke="#101040" stroke-width="3.500" d="M12 12L19 19"/><path fill="#d8fcff" stroke="#101058" stroke-width="1.500" d="M2 1H13L15 4V12L12 13H4L1 10V3z"/><path stroke="#70d8e8" stroke-width="2" d="M4 5L8 3"/></svg>
  <svg class="t" viewBox="0 0 20 20"><path fill="#90e8f8" stroke="#101058" stroke-width="1.300" d="M1 4H5V16H1zM7 1H12V19H7zM15 4H19V15H15z"/><path fill="#fff000" d="M10 6h6l-2 3 2 4h-6z"/><path stroke="#078" d="M3 6V14M9 3V17"/></svg>
  <svg class="t" viewBox="0 0 20 20"><path fill="#181060" d="M0 0h10v12L0 19z"/><path fill="#ffffa0" d="M10 0h10v18L10 11z"/><path fill="#0a9aa8" d="M0 19L10 11 20 17V20H0z"/></svg>
  <svg class="t" viewBox="0 0 20 20"><path fill="#1010c8" d="M2 0h4l2 5-3 3-3-3z"/><path stroke="#8080ff" d="M1 3L7 6"/><path fill="#a8e8f8" d="M6 8L8 6 18 16H6z"/><path stroke="#fff000" stroke-width="3" d="M5 17.500H18"/></svg>
  <i class="vgrip"></i>
  <svg class="t wide" viewBox="0 0 20 20"><path stroke="#1020b0" fill="none" stroke-width="1.500" d="M1 4H19M4 1L1 4 4 7M16 1L19 4 16 7"/><path fill="#ffd8c0" stroke="#101058" stroke-width="1.300" d="M1 11h18v7H1z"/><path stroke="#101058" d="M4 12V15M7 12V15M10 12V15M13 12V15M16 12V15"/></svg>
  <svg class="t" viewBox="0 0 20 20"><path fill="#555" stroke="#111" stroke-width="1.300" d="M6 1H16V8H13V13H16V19H8V14H11V7H6z"/><circle cx="5" cy="8" r="4" fill="#3ab8c8" stroke="#124"/><path stroke="#ffe000" d="M3 7L7 9"/></svg>
  <svg class="dslogo" width="44" height="34" viewBox="0 0 44 34" fill="none"><path stroke="#e0282c" stroke-width="2.200" d="M13 2Q20 3 18 6T12 10"/><path stroke="#3f2d8c" stroke-width="2.200" d="M9 12Q16 12 14 17T4 22Q7 18 8 14"/><path stroke="#f2a010" stroke-width="2.500" d="M26 9Q18 10 18 13T22 16 15 21"/><text x="11" y="30" textLength="31">CATIA</text></svg>
</section>

<footer class="status">
  <span>Select an object or a command</span>
  <div class="power"></div>
  <div class="sbtn"><svg width="18" height="14" fill="none" stroke="#8b8b9b" stroke-width="1.500"><path d="M3 2h7v7H3zM13 10H16V2M1 12.500H17"/></svg></div>
  <div class="sbtn"><svg width="18" height="14" fill="none" stroke="#8b8b9b" stroke-width="1.500"><circle cx="9" cy="6" r="5"/><path d="M9 5V9M9 2V3M1 12.500H17M16 3V12"/></svg></div>
</footer>

<footer class="taskbar">
  <div class="start"><svg width="16" height="16" fill="#fff"><path d="M0 2L7 1V7.500H0zM8 1L16 0V7.500H8zM0 8.500H7V15L0 14zM8 8.500H16V16L8 15z"/></svg></div>
  <div class="search"><svg width="22" height="22"><circle cx="11" cy="11" r="8.800" fill="none" stroke="#111" stroke-width="2.700"/></svg><span>Type here to search</span><svg class="mic" width="12" height="18" fill="none" stroke="#333"><path d="M3.500 1.500h5v9h-5zM.5 8V13.500H11.500V8M6 14V17M3 16.500H9"/></svg></div>
  <div class="app w46"><svg width="17" height="16" fill="none" stroke="#fff"><path d="M1.500 4.500h9v7h-9zM0 .5H12M0 15.500H12M1.500 0V2M10.500 0V2M1.500 14V16M10.500 14V16M15.500 0V16"/><path fill="#fff" d="M14 5h3v3h-3z"/></svg></div>
  <div class="app w58"><svg width="22" height="22" viewBox="0 0 22 22"><path fill="#0f80dc" d="M1 10C2 4 6 .5 11.500.5C18 .5 21 5 21 10V13H7C7 17 10 18.500 13 18.500Q17 18.500 20 17V20.500Q17 22 12.500 22C6 22 3 18 3 13.500Q3 9 8 6Q3.500 7 1 10zM7.200 9.500H14.800Q15 5.500 11.500 5.500T7.200 9.500z"/></svg></div>
  <div class="app run doc"><svg width="16" height="21"><path fill="#f4f4f2" d="M0 0H11L16 5V21H0z"/><path fill="#bbb" d="M11 0V5H16z"/></svg></div>
  <div class="app w58"><svg width="25" height="20" viewBox="0 0 25 20"><path fill="#fff" d="M0 6L12.500 0 25 6V20H0z"/><path fill="#060b13" d="M2 7H23L14 12 18 17 9 12z"/></svg></div>
  <div class="app run fold"><svg width="23" height="20" viewBox="0 0 23 20"><path fill="#e9b94b" d="M0 0h8l2 2h12v8H0z"/><path fill="#ffe59a" d="M0 3h22v15H0z"/><path fill="#3aa6e0" d="M4 20V12q0-2 2-2h10q2 0 2 2v8h-4v-4H8v4z"/></svg></div>
  <div class="app run active"><svg width="24" height="23"><path fill="#ddd" d="M0 0h24v23H0z"/><use href="#app" x="1" y="1" width="22" height="21"/></svg></div>
  <div class="tray">
    <svg class="people" width="17" height="17" fill="none" stroke="#fff" stroke-width="1.200"><circle cx="5" cy="8" r="2.500"/><circle cx="11" cy="3.500" r="2.500"/><path d="M1 15Q2 10 6 11T9 15M9 9Q12 6 15 9"/></svg>
    <svg width="16" height="16"><circle cx="8" cy="8" r="7" fill="#144a8c"/><path stroke="#d8ecff" d="M9 0V16M2 8H14"/><path fill="#9cd0ff" d="M3 4L7 8 3 12z"/><circle cx="10" cy="8" r="2.500" fill="#b0e0ff"/></svg>
    <svg width="16" height="16"><path fill="#f2d21c" d="M0 8Q0 1 7 1T14 7L9 9V15Q3 14 3 10z"/><path fill="none" stroke="#443a00" d="M2 7Q8 3 13 6M4 10Q7 7 10 8"/><path fill="#bbb" d="M8 9h6v6H8z"/></svg>
    <svg width="16" height="16"><circle cx="8" cy="8" r="7" fill="#c8c8c8"/><circle cx="8.500" cy="8" r="4" fill="none" stroke="#222" stroke-width="1.500"/><circle cx="9" cy="8" r="1.500" fill="#222"/></svg>
    <svg width="16" height="16"><path fill="#1e88ff" d="M0 0h16v16H0z"/><path fill="none" stroke="#fff" stroke-width="2" d="M2 5L5 11 8 5 11 11 14 5"/></svg>
    <svg width="16" height="16"><path fill="#fff" d="M7 0L14 3V8Q13 13 7 15Q1 13 0 8V3z"/><path stroke="#060b13" d="M7 1V15M1 7.500H13"/><circle cx="11" cy="11" r="4.500" fill="#16a04c"/><path fill="none" stroke="#fff" stroke-width="1.200" d="M9 11L10.500 12.500 13 9.500"/></svg>
    <svg width="16" height="16"><path fill="#1d9be0" d="M0 0h16v16H0z"/><path fill="none" stroke="#b8ecff" d="M4 3h9v6H4zM2 13Q7 7 14 12M5 5h6"/></svg>
    <svg width="16" height="16"><path fill="#ddd" d="M1 1h4l3 2 3-2h4v7q-2 7-7 7T1 8z"/><path fill="#333" d="M4 6h2v2H4zM10 6h2v2h-2zM6 10h4v3H6z"/></svg>
    <svg width="17" height="16" fill="none" stroke="#fff" stroke-width="1.200"><path d="M4 3.500H16V11.500H3V8M10 12V15M6 15H13M.5 1.500h4v4h-4z"/></svg>
    <svg width="17" height="16" fill="none" stroke="#fff" stroke-width="1.200"><path d="M1 5H3.500L7 2V14L3.500 11H1z"/><circle cx="11.500" cy="11" r="4.500" fill="#d82432" stroke="none"/><path d="M10 9.500L13 12.500M13 9.500L10 12.500"/></svg>
    <span class="lang">ENG</span>
    <div class="clock"><span>7:08 AM</span><span>12/6/2019</span></div>
    <i class="peek"></i>
  </div>
</footer>
</body>
</html>
```
FILE: styles.css
```css
* { box-sizing: border-box; }
body { margin: 0; width: 1920px; height: 1080px; overflow: hidden; display: flex; flex-direction: column; font-family: "Noto Sans", "Open Sans", sans-serif; font-size: 12px; color: #111; background: #cfcfe5; }
svg { display: block; flex: none; }
.defs { position: absolute; }

.titlebar { height: 23px; background: #fff; display: flex; align-items: center; flex: none; }
.appicon { margin: 0 6px 0 3px; }
.title { letter-spacing: -.2px; }
.wincontrols { margin: -2px 17px 0 auto; width: 104px; }

.menubar { height: 20px; flex: none; display: flex; background: #cfcfe5; border-bottom: 1px solid #fff; }
.menu { padding: 0 0 0 6.500px; line-height: 20px; letter-spacing: -.15px; }
.menu u { text-underline-offset: 2px; }
.on { background: #fde0b2; }
.w42 { width: 42px; } .w44 { width: 44px; } .w48 { width: 48px; } .w49 { width: 49px; }
.w53 { width: 53px; } .w65 { width: 65px; } .w68 { width: 68px; }
.mdi { margin-left: auto; display: flex; gap: 1px; background: #e6e6ea; padding-right: 1px; }
.mdi svg { background: #fff; }

.work { display: flex; height: 935px; flex: none; background: #fff; }
.viewport { position: relative; width: 1882px; height: 934px; border-top: 2px solid #6d6d72; display: flex; overflow: hidden; background: linear-gradient(#333366 0, #4b4b78 70%, #57577f 75%, #acacc0 100%); }
.scene { position: absolute; left: 0; top: 0; }
.tracks { fill: none; stroke: #fff; stroke-width: 1; shape-rendering: crispEdges; }
.tracks path { marker: url(#node); }
.axis { font: 14px "Noto Sans", sans-serif; fill: #fff; }
.yellow { fill: #fff000; font-size: 12px; }
.snip { font-size: 12px; fill: #383766; }

.scroll { position: relative; width: 18px; border-left: 2px solid #85858c; border-right: 1px solid #34347c; display: flex; flex-direction: column; background: #7b7bff; }
.arrow { height: 16px; display: flex; align-items: center; justify-content: center; border: solid #34347c; border-width: 0 0 1px; }
.arrow:last-child { border-width: 1px 0; height: 15px; }
.track { height: 439px; background: repeating-conic-gradient(#7b7bff 0 25%, #5353b4 0 50%) 0 0 / 2px 2px; border-bottom: 1px solid #34347c; }
.thumb { flex: 1; }

.tree { position: relative; list-style: none; margin: .4px 0 0; padding: 0; font-size: 13px; color: #fff; }
.tree li { height: 26.630px; display: flex; align-items: center; }
.node { width: 18px; height: 26.630px; overflow: visible; }
.ico { width: 22px; height: 22px; margin: -6px 2px 0 1px; }
.seq { width: 20px; height: 20px; margin: -6px 3px 0 2px; }
.tree span { height: 20px; line-height: 19px; padding: 0 1.500px; background: #343466; border-radius: 2px; white-space: nowrap; }
.tree .num { letter-spacing: .2px; }
.tree .bare { margin-left: -1px; }
.l2 { margin-left: 19px; }
.l3 { margin-left: 38px; }

.sidebar { width: 38px; display: flex; flex-direction: column; padding-left: 5px; background: linear-gradient(90deg, #fff 0, #fff 3px, #cfcfe5 9px, #cfcfe5 29px, #9d9db2 38px); }
.hgrip { height: 3px; width: 17px; margin-top: 6px; background: #fff; border-bottom: 1px solid #8e8e9c; border-right: 1px solid #8e8e9c; flex: none; }
.tool { width: 20px; height: 20px; margin: 0 0 8.250px 4.500px; filter: drop-shadow(1px 2px 0 rgba(150, 150, 150, .25)); }
.top { margin: 10px 0 5px 3.500px; width: 23px; height: 23px; }
.stack { margin-top: 9.500px; }
.low { margin-top: 2px; }
.drop { width: 0; height: 0; border: 4px solid transparent; border-top-color: #000; border-bottom: 0; flex: none; }
.sidebar .drop { align-self: flex-end; margin: -4px 2px 0 0; }
.sidebar .mid { margin: -205px 2px 201px 0; }
.sidebar .drop.box { border: 0; width: 9px; height: 6px; margin: -8px 1px 0 0; background: #fff; }
.box { position: relative; }
.sidebar .box::after, .toolbar .box::after { content: ""; display: block; border: 4px solid transparent; border-top-color: #000; border-bottom: 0; width: 0; }

.toolbar { height: 38px; flex: none; display: flex; align-items: center; border-bottom: 1px solid #55555c; background: linear-gradient(#fff 0, #fff 3px, #cfcfe5 13px, #cfcfe5 27px, #9d9db2 38px); }
.vgrip { width: 2px; height: 16px; margin: -9px 7px 0 10px; background: #fff; border-right: 1px solid #8e8e9c; }
.first { margin: -9px 7px 0 6px; }
.t { width: 20px; height: 20px; margin: 4px 4px 0; filter: drop-shadow(2px 2px 0 rgba(150, 150, 150, .25)); }
.wide { margin-right: 5.700px; }
.nar { margin: 4px 1px 0; }
.dis { fill: none; stroke: #9c9ca6; stroke-width: 1.200; filter: drop-shadow(1px 1px 0 #fff); }
.fx { font: italic bold 20px/20px "Liberation Serif", serif; white-space: nowrap; margin-left: 5px; }
.fx small { font-size: 12px; }
.toolbar .drop { margin: 27px 0 0 -6px; position: relative; left: 1px; margin-right: -2px; }
.toolbar .drop.box { border: 0; width: 9px; height: 6px; background: #fff; margin-left: -7px; }
.dslogo { margin: -2px 6px 0 auto; }
.dslogo text { font: italic bold 10px "Noto Sans", sans-serif; fill: #3f2d8c; }

.status { height: 24px; flex: none; display: flex; align-items: center; padding-left: 3px; background: #cfcfe5; }
.status > span { letter-spacing: -.36px; margin-top: -1px; }
.power { margin-left: auto; width: 300px; height: 20px; background: #fff; border: 1px solid #77777c; }
.sbtn { width: 33px; height: 21px; margin-left: 1px; border: 1px solid #fff; border-right-color: #77777c; border-bottom-color: #77777c; display: flex; align-items: center; justify-content: center; }

.taskbar { height: 40px; flex: none; display: flex; background: #060b13; color: #fff; }
.start { width: 48px; display: flex; align-items: center; justify-content: center; }
.search { width: 344px; background: #f1f1f1; border-top: 1px solid #bdbdbd; display: flex; align-items: center; padding-left: 9px; color: #444; font-size: 15px; }
.search span { margin: -1px 0 0 8.500px; letter-spacing: -.5px; }
.mic { margin: 0 15px 0 auto; }
.app { display: flex; align-items: center; justify-content: center; }
.w46 { width: 46px; } .w58 { width: 58px; }
.run { box-shadow: inset 0 -2px #76b9ed; }
.doc { width: 40px; }
.fold { width: 40px; }
.active { width: 48px; margin-left: 5px; background: #34383e; }
.tray { margin-left: auto; display: flex; align-items: center; gap: 8px; }
.people { margin-right: 10px; }
.lang { font-size: 12px; margin-left: -1px; }
.clock { display: flex; flex-direction: column; align-items: center; line-height: 18px; width: 56px; margin: 0 -2.500px 0 2px; letter-spacing: -.3px; }
.peek { width: 1px; height: 40px; background: #5d6066; margin-right: 3px; }
```
